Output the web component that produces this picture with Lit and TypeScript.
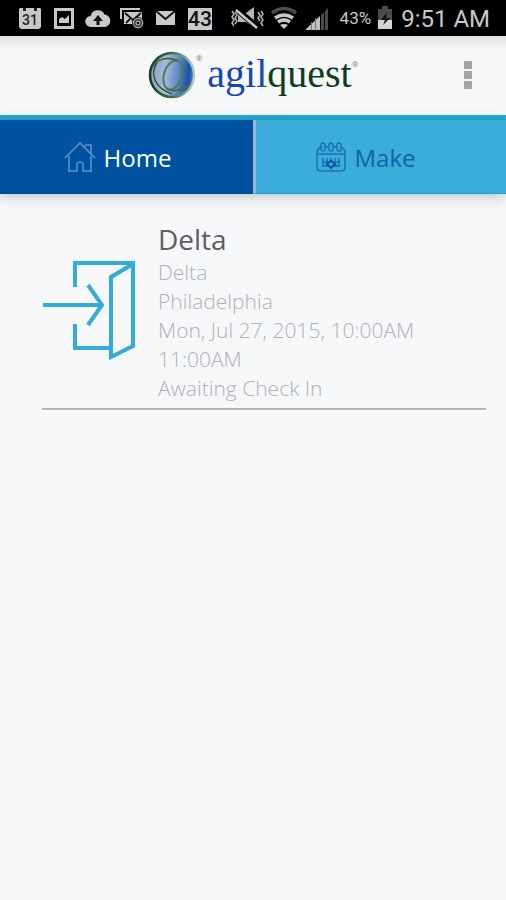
import { LitElement, html, svg, css } from "lit";
import { customElement, property } from "lit/decorators.js";

interface Reservation {
  title: string;
  lines: string[];
}

const statusIcons = [
  // calendar
  svg`<path fill="#c9c9c9" d="M3 3h20l1 1v18l-2 2H4l-2-2V4z"/>
    <path fill="#222" d="M6 3h3v3H6zM17 3h3v3h-3z"/>
    <text x="13" y="20" text-anchor="middle" font-size="14" font-weight="500" fill="#222">31</text>`,
  // picture
  svg`<path fill="#c9c9c9" fill-rule="evenodd" d="M3 3h20v21H3zM6 6v15h14V6z"/>
    <path fill="#c9c9c9" d="M8 18v-4l3-2 3 2 4-4v8z"/>`,
  // cloud upload
  svg`<path fill="#c9c9c9" d="M6 22a5.500 5.500 0 0 1-.5-11A7.500 7.500 0 0 1 19.500 9.500 6.300 6.300 0 0 1 20 22z"/>
    <path fill="#111" d="M13 10l5 6h-3.500v4h-3v-4H8z"/>`,
  // mail account
  svg`<path fill="none" stroke="#c9c9c9" stroke-width="2" d="M2 14V4h19"/>
    <path fill="#c9c9c9" d="M5 7h18v12H5z"/>
    <path fill="none" stroke="#111" stroke-width="1.800" d="M6 8l8 7 8-7M7 18l4-4"/>
    <circle cx="19" cy="18" r="6" fill="#111"/>
    <circle cx="19" cy="18" r="4.500" fill="none" stroke="#a5a5a5" stroke-width="1.500"/>
    <circle cx="19" cy="18" r="2" fill="none" stroke="#a5a5a5" stroke-width="1.500"/>`,
  // envelope
  svg`<path fill="#c9c9c9" d="M3 6h19v14H3z"/>
    <path fill="none" stroke="#111" stroke-width="1.800" d="M3 6l9.500 8L22 6"/>`,
  // temperature badge
  svg`<path fill="#c9c9c9" d="M1 3h24v22H1z"/>
    <text x="13" y="21" text-anchor="middle" font-size="21" font-weight="500" fill="#111">43</text>`,
];

@customElement("status-bar")
export class StatusBar extends LitElement {
  static styles = css`
    :host {
      display: flex;
      justify-content: space-between;
      align-items: center;
      height: 36px;
      padding: 0 16px 0 17px;
      background: #000;
      color: #c9c9c9;
      font-family: Roboto, sans-serif;
    }
    .group { display: flex; align-items: center; gap: 8px; }
    .right { gap: 6px; }
    svg { display: block; flex: none; font-family: Roboto, sans-serif; }
    .percent { font-size: 17px; margin-left: 4px; }
    .clock { font-size: 24px; line-height: 36px; margin-left: 2px; padding-top: 2px; }
  `;

  render() {
    return html`
      <div class="group">
        ${statusIcons.map((i) => html`<svg width="26" height="26" viewBox="0 0 26 26" aria-hidden="true">${i}</svg>`)}
      </div>
      <div class="group right">
        <svg width="34" height="26" viewBox="0 0 34 26" aria-hidden="true">
          <path fill="#b5b5b5" d="M8 8h8l8-6v20l-8-5H8z" />
          <path stroke="#000" stroke-width="6" d="M6 4l23 19" />
          <path stroke="#c9c9c9" stroke-width="2.500" d="M6 5l21 18" />
          <path fill="none" stroke="#b5b5b5" stroke-width="1.500"
            d="M2 6l2 3-2 3 2 3-2 3 2 3M5 7l2 3-2 3 2 3-2 3M31 6l2 3-2 3 2 3-2 3 2 3M28 7l2 3-2 3 2 3" />
        </svg>
        <svg width="28" height="26" viewBox="0 0 28 26" aria-hidden="true">
          <g fill="none" stroke-width="3.500">
            <path stroke="#4c4c4c" d="M2 8q12-9 24 0" />
            <path stroke="#c9c9c9" d="M5 13q9-6 18 0M8 17q6-4 12 0" />
          </g>
          <path fill="#c9c9c9" d="M10 20q4-2 8 0l-4 4z" />
        </svg>
        <svg width="26" height="26" viewBox="0 0 26 26" aria-hidden="true">
          <path fill="#c0c0c0" d="M2 25v-1L16 11v14z" />
          <path fill="#4c4c4c" d="M17 10l3-3v18h-3zM21 6l3-3v22h-3z" />
          <path stroke="#777" d="M7.500 17v8M11.500 13v12" />
        </svg>
        <span class="percent">43%</span>
        <svg width="16" height="26" viewBox="0 0 16 26" aria-hidden="true">
          <path fill="#4c4c4c" d="M5 1h6v3h4v11H1V4h4z" />
          <path fill="#d5d5d5" d="M1 15h14v9H1z" />
          <path fill="#111" d="M10 7l-6 8h4l-2 5 7-7H9z" />
        </svg>
        <time class="clock">9:51 AM</time>
      </div>
    `;
  }
}

@customElement("brand-header")
export class BrandHeader extends LitElement {
  static styles = css`
    :host {
      display: grid;
      grid-template-columns: 1fr auto 1fr;
      align-items: center;
      height: 79px;
      background: linear-gradient(#dfe1e2, #f5f7f9 14px);
      border-bottom: 5px solid #22a9d3;
    }
    .brand { grid-column: 2; display: flex; align-items: flex-start; padding-bottom: 4px; }
    .globe { display: block; margin-top: 5px; }
    .name {
      font: 40px/56px "Liberation Serif", serif;
      color: #1748aa;
      margin-left: 5px;
    }
    .quest { color: #0f3d1c; }
    .mark { font: 8px/12px "Open Sans", sans-serif; color: #777; margin-top: 6px; }
    .end { margin-top: 12px; }
    .menu {
      justify-self: end;
      display: flex;
      flex-direction: column;
      gap: 2px;
      padding: 10px 10px 12px;
      margin-right: 24px;
      border: 0;
      background: none;
    }
    .dot { width: 8px; height: 8px; background: #a3a4a6; }
  `;

  render() {
    return html`
      <div class="brand">
        <svg class="globe" width="48" height="48" viewBox="0 0 48 48" aria-hidden="true">
          <defs>
            <linearGradient id="ball" x1="0" x2="1" y1=".4" y2=".5">
              <stop offset="0" stop-color="#8b9fc4" />
              <stop offset=".35" stop-color="#a9b8dc" />
              <stop offset=".65" stop-color="#5f86c6" />
              <stop offset=".88" stop-color="#1550a8" />
              <stop offset="1" stop-color="#5c86b8" />
            </linearGradient>
            <linearGradient id="rim" x1="0" x2="1">
              <stop offset="0" stop-color="#0f3d22" />
              <stop offset=".5" stop-color="#39713f" />
              <stop offset="1" stop-color="#b7c9bd" />
            </linearGradient>
          </defs>
          <circle cx="24" cy="24" r="22" fill="url(#ball)" stroke="url(#rim)" stroke-width="2.500" />
          <path fill="none" stroke="#c3d1cc" stroke-width="2" d="M6 17c-2 12 6 24 18 26" />
          <path fill="none" stroke="#1d4a34" stroke-width="1.500" d="M9 11C1 24 8 38 24 43" />
          <ellipse cx="25" cy="24" rx="9" ry="15" fill="none" stroke="#4b7f4f" stroke-width="2" transform="rotate(17 25 24)" />
          <path fill="none" stroke="#3c7048" stroke-width="1.800"
            d="M7 12C13 7 23 6 30 10M19 38c6 3 15 2 23-5" />
        </svg>
        <span class="mark">®</span>
        <span class="name">agil<span class="quest">quest</span></span>
        <span class="mark end">®</span>
      </div>
      <button class="menu" aria-label="More options">
        <span class="dot"></span><span class="dot"></span><span class="dot"></span>
      </button>
    `;
  }
}

@customElement("tab-bar")
export class TabBar extends LitElement {
  static styles = css`
    :host {
      display: grid;
      grid-template-columns: 1fr 1fr;
      height: 74px;
      box-shadow: 0 2px 12px rgba(60, 70, 80, 0.3);
    }
    .tab {
      display: flex;
      align-items: center;
      justify-content: center;
      gap: 8px;
      padding: 2px 30px 0 0;
      border: 0;
      border-bottom: 1px solid #1ba3cf;
      font: 24px/32px "Open Sans", sans-serif;
      background: #3aaddb;
      color: #1263a8;
    }
    .tab + .tab { border-left: 3px solid #9db4d2; }
    .active {
      padding-right: 18px;
      background: #0052a0;
      color: #fff;
      border-bottom-color: #0a4592;
    }
    svg { display: block; }
  `;

  render() {
    return html`
      <button class="tab active" aria-current="page">
        <svg width="32" height="32" viewBox="0 0 32 32" fill="none" stroke="#5f94ca" stroke-width="1.500" aria-hidden="true">
          <path d="M1 16L16 1l15 15M20 5l2-2h5v9M5 14v15h8v-7q0-2 3-2t3 2v7h8V14" />
        </svg>
        Home
      </button>
      <button class="tab">
        <svg width="30" height="32" viewBox="0 0 30 32" fill="none" stroke="#1a72b2" stroke-width="1.500" aria-hidden="true">
          <path d="M5 5Q1 7 1 11v14q0 4 4 4h20q4 0 4-4V11q0-4-4-6M1 12h28M9 5h3M18 5h3" />
          <rect x="5" y="1" width="4" height="8" rx="2" />
          <rect x="13" y="1" width="4" height="8" rx="2" />
          <rect x="21" y="1" width="4" height="8" rx="2" />
          <path d="M7 16v9M11 16v9M15 16v9M19 16v9M23 16v9M6 20h18M6 24h18" />
          <path fill="#3aaddb" stroke="#0d58a4" stroke-width="2" d="M15 19l4 3-4 4-4-4z" />
        </svg>
        Make
      </button>
    `;
  }
}

@customElement("reservation-card")
export class ReservationCard extends LitElement {
  @property({ attribute: false }) reservation!: Reservation;

  static styles = css`
    :host {
      display: flex;
      gap: 22px;
      padding-bottom: 5px;
      border-bottom: 2px solid #b4b6b8;
      font-family: "Open Sans", sans-serif;
    }
    svg { display: block; flex: none; margin-top: 40px; }
    .title { margin: 0; font-size: 28px; line-height: 38px; font-weight: 400; color: #5c5e61; }
    .line { margin: 0; font-size: 21px; line-height: 29px; font-weight: 300; color: #b0b2b5; }
  `;

  render() {
    return html`
      <svg width="94" height="102" viewBox="0 0 94 102" fill="none" stroke="#35abd7" stroke-width="4" aria-hidden="true">
        <path d="M33 27V3h58M33 64v24h35M1 45h58" />
        <path d="M46 25l14 20-14 20" />
        <path d="M69 17v80l22-11V4z" />
      </svg>
      <div>
        <h2 class="title">${this.reservation.title}</h2>
        ${this.reservation.lines.map((l) => html`<p class="line">${l}</p>`)}
      </div>
    `;
  }
}

@customElement("app-root")
export class AppRoot extends LitElement {
  static styles = css`
    :host { display: block; min-height: 100vh; background: #f5f7f9; }
    .list { padding: 26px 20px 24px 42px; }
  `;

  private reservations: Reservation[] = [
    {
      title: "Delta",
      lines: ["Delta", "Philadelphia", "Mon, Jul 27, 2015, 10:00AM", "11:00AM", "Awaiting Check In"],
    },
  ];

  render() {
    return html`
      <status-bar></status-bar>
      <brand-header></brand-header>
      <tab-bar></tab-bar>
      <main class="list">
        ${this.reservations.map((r) => html`<reservation-card .reservation=${r}></reservation-card>`)}
      </main>
    `;
  }
}
